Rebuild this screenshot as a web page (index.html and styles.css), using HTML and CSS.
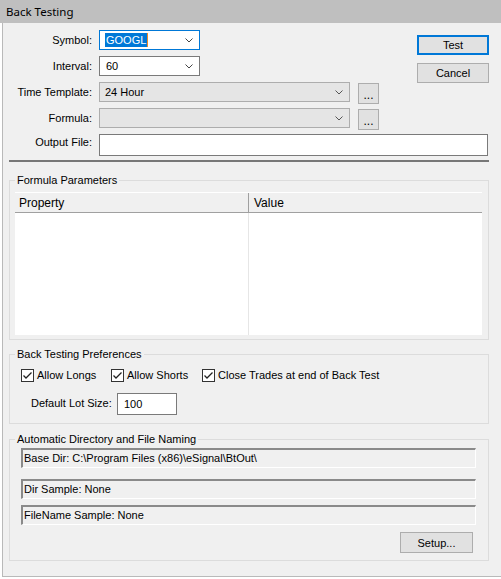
FILE: index.html
```html
<!DOCTYPE html>
<html>
<head>
<meta charset="utf-8">
<link rel="stylesheet" href="styles.css">
</head>
<body>
<div class="titlebar"><span class="title">Back Testing</span></div>
<div class="window">
  <div class="top">
    <div class="fields">
      <span class="lbl">Symbol:</span>
      <div class="row">
        <div class="combo edit focus w101">
          <span class="seltext">GOOGL</span><span class="caret"></span>
          <svg class="chev" width="8" height="5" viewBox="0 0 8 5"><polyline points="0.5,0.5 4,4 7.5,0.5" fill="none" stroke="#444" stroke-width="1"/></svg>
        </div>
      </div>
      <span class="lbl">Interval:</span>
      <div class="row">
        <div class="combo edit w101">
          <span class="val">60</span>
          <svg class="chev" width="8" height="5" viewBox="0 0 8 5"><polyline points="0.5,0.5 4,4 7.5,0.5" fill="none" stroke="#444" stroke-width="1"/></svg>
        </div>
      </div>
      <span class="lbl">Time Template:</span>
      <div class="row">
        <div class="combo list w251">
          <span class="val">24 Hour</span>
          <svg class="chev" width="8" height="5" viewBox="0 0 8 5"><polyline points="0.5,0.5 4,4 7.5,0.5" fill="none" stroke="#555" stroke-width="1"/></svg>
        </div>
        <div class="btn dots">...</div>
      </div>
      <span class="lbl">Formula:</span>
      <div class="row">
        <div class="combo list w251">
          <span class="val"></span>
          <svg class="chev" width="8" height="5" viewBox="0 0 8 5"><polyline points="0.5,0.5 4,4 7.5,0.5" fill="none" stroke="#555" stroke-width="1"/></svg>
        </div>
        <div class="btn dots">...</div>
      </div>
    </div>
    <div class="buttons">
      <div class="btn default">Test</div>
      <div class="btn">Cancel</div>
    </div>
  </div>
  <div class="output-row">
    <span class="lbl">Output File:</span>
    <div class="textbox wide"></div>
  </div>
  <div class="sep"></div>

  <fieldset class="group formula">
    <legend>Formula Parameters</legend>
    <div class="grid">
      <div class="ghead">
        <div class="hcell c1">Property</div>
        <div class="hcell c2">Value</div>
      </div>
      <div class="gbody">
        <div class="bcell c1"></div>
        <div class="bcell c2"></div>
      </div>
    </div>
  </fieldset>

  <fieldset class="group prefs">
    <legend>Back Testing Preferences</legend>
    <div class="checks">
      <label class="check"><span class="box"><svg width="11" height="11" viewBox="0 0 11 11"><polyline points="1.5,5.5 4,8 9.5,2.5" fill="none" stroke="#222" stroke-width="1.3"/></svg></span>Allow Longs</label>
      <label class="check"><span class="box"><svg width="11" height="11" viewBox="0 0 11 11"><polyline points="1.5,5.5 4,8 9.5,2.5" fill="none" stroke="#222" stroke-width="1.3"/></svg></span>Allow Shorts</label>
      <label class="check"><span class="box"><svg width="11" height="11" viewBox="0 0 11 11"><polyline points="1.5,5.5 4,8 9.5,2.5" fill="none" stroke="#222" stroke-width="1.3"/></svg></span>Close Trades at end of Back Test</label>
    </div>
    <div class="lot">
      <span class="lotlbl">Default Lot Size:</span>
      <div class="textbox lotbox">100</div>
    </div>
  </fieldset>

  <fieldset class="group dirs">
    <legend>Automatic Directory and File Naming</legend>
    <div class="static first">Base Dir: C:\Program Files (x86)\eSignal\BtOut\</div>
    <div class="static second">Dir Sample: None</div>
    <div class="static third">FileName Sample: None</div>
    <div class="setup-row"><div class="btn setup">Setup...</div></div>
  </fieldset>
</div>
</body>
</html>
```
FILE: styles.css
```css
* { box-sizing: border-box; }
html, body { margin: 0; padding: 0; }
body {
  background: #ffffff;
  width: 501px;
  height: 579px;
  overflow: hidden;
  font-family: "Liberation Sans", Arial, sans-serif;
  font-size: 11px;
  color: #000;
}
.titlebar {
  height: 23px;
  background: #bfbfbf;
  padding-left: 6px;
  display: flex;
  align-items: center;
}
.title {
  font-family: "Noto Sans", "Open Sans", sans-serif;
  font-size: 11.5px;
  color: #000;
  margin-top: -1px;
}
.window {
  margin-left: 2px;
  height: 554px;
  background: #f0f0f0;
  border-left: 1px solid #b9b9b9;
  border-bottom: 1px solid #b9b9b9;
}
.top {
  display: flex;
  padding-top: 7px;
}
.fields {
  display: grid;
  grid-template-columns: 89px auto;
  column-gap: 7px;
  row-gap: 6px;
  align-items: center;
}
.lbl {
  text-align: right;
  line-height: 14px;
}
.row {
  display: flex;
  align-items: flex-start;
  height: 20px;
}
.combo {
  height: 20px;
  display: flex;
  align-items: center;
  justify-content: space-between;
  padding: 0 6px 0 5px;
}
.w101 { width: 101px; }
.w251 { width: 251px; }
.combo.edit {
  background: #fff;
  border: 1px solid #7a7a7a;
}
.combo.edit.focus {
  border-color: #0078d7;
}
.combo.list {
  background: #e5e5e5;
  border: 1px solid #adadad;
}
.combo .val { line-height: 14px; }
.combo.edit .val { padding-left: 1px; }
.seltext {
  background: #0078d7;
  color: #fff;
  line-height: 14px;
  padding: 0 1px;
}
.caret {
  width: 1px;
  height: 14px;
  background: #f08a24;
  margin-right: auto;
}
.chev { display: block; flex: none; }
.btn {
  background: #e1e1e1;
  border: 1px solid #adadad;
  display: flex;
  align-items: center;
  justify-content: center;
  line-height: 14px;
}
.dots {
  width: 21px;
  height: 21px;
  margin-left: 8px;
  margin-top: 1px;
  padding-top: 3px;
  font-size: 12px;
}
.buttons {
  display: flex;
  flex-direction: column;
  gap: 8px;
  margin-left: 38px;
  margin-top: 5px;
}
.buttons .btn {
  width: 72px;
  height: 20px;
}
.btn.default {
  border: 2px solid #0078d7;
}
.output-row {
  display: flex;
  align-items: center;
  gap: 7px;
  margin-top: 6px;
}
.output-row .lbl {
  width: 89px;
  margin-top: -6px;
}
.textbox {
  background: #fff;
  border: 1px solid #7a7a7a;
  height: 22px;
}
.wide { width: 389px; }
.sep {
  margin: 4px 0 0 6px;
  width: 480px;
  height: 2px;
  background: #777;
}
.group {
  margin: 0 0 0 6px;
  width: 480px;
  border: 1px solid #dcdcdc;
  padding: 0;
  min-width: 0;
}
.group legend {
  padding: 0 2px;
  line-height: 14px;
  height: 14px;
}
.formula {
  margin-top: 11px;
  padding: 5px 6px 4px 5px;
}
.formula legend { margin-left: 0; }
.grid {
  width: 467px;
  background: #fff;
}
.ghead {
  display: flex;
  height: 21px;
  background: #f0f0f0;
  border-top: 1px solid #fff;
  border-bottom: 1px solid #a0a0a0;
}
.hcell {
  padding-left: 4px;
  display: flex;
  align-items: center;
  font-size: 12px;
}
.c1 { width: 234px; }
.c2 { flex: 1; }
.hcell.c1 { border-right: 1px solid #a0a0a0; }
.hcell.c2 { padding-left: 5px; }
.gbody {
  display: flex;
  height: 122px;
}
.bcell.c1 { border-right: 1px solid #e6e6e6; }
.prefs {
  margin-top: 7px;
  padding: 7px 11px 8px 11px;
}
.prefs legend, .dirs legend { margin-left: -6px; }
.checks {
  display: flex;
  height: 14px;
  align-items: center;
}
.check {
  display: flex;
  align-items: center;
  line-height: 14px;
}
.check:nth-child(1) { width: 90px; }
.check:nth-child(2) { width: 91px; }
.box {
  width: 13px;
  height: 13px;
  border: 1px solid #333;
  background: #fff;
  margin-right: 3px;
  display: flex;
  align-items: center;
  justify-content: center;
}
.box svg { display: block; }
.lot {
  display: flex;
  align-items: center;
  margin-top: 11px;
  padding-left: 10px;
}
.lotlbl {
  width: 86px;
  margin-top: -3px;
}
.lotbox {
  width: 60px;
  padding-left: 6px;
  line-height: 20px;
}
.dirs {
  margin-top: 8px;
  padding: 2px 12px 7px 11px;
}
.static {
  height: 20px;
  border-top: 2px solid #8a8a8a;
  border-left: 2px solid #8a8a8a;
  border-right: 1px solid #fff;
  border-bottom: 1px solid #fff;
  padding-left: 1px;
  line-height: 16px;
  white-space: nowrap;
  overflow: hidden;
}
.static.second { margin-top: 11px; }
.static.third { margin-top: 6px; }
.setup-row {
  display: flex;
  justify-content: flex-end;
  margin-top: 7px;
  padding-right: 3px;
}
.btn.setup {
  width: 73px;
  height: 21px;
}
```
